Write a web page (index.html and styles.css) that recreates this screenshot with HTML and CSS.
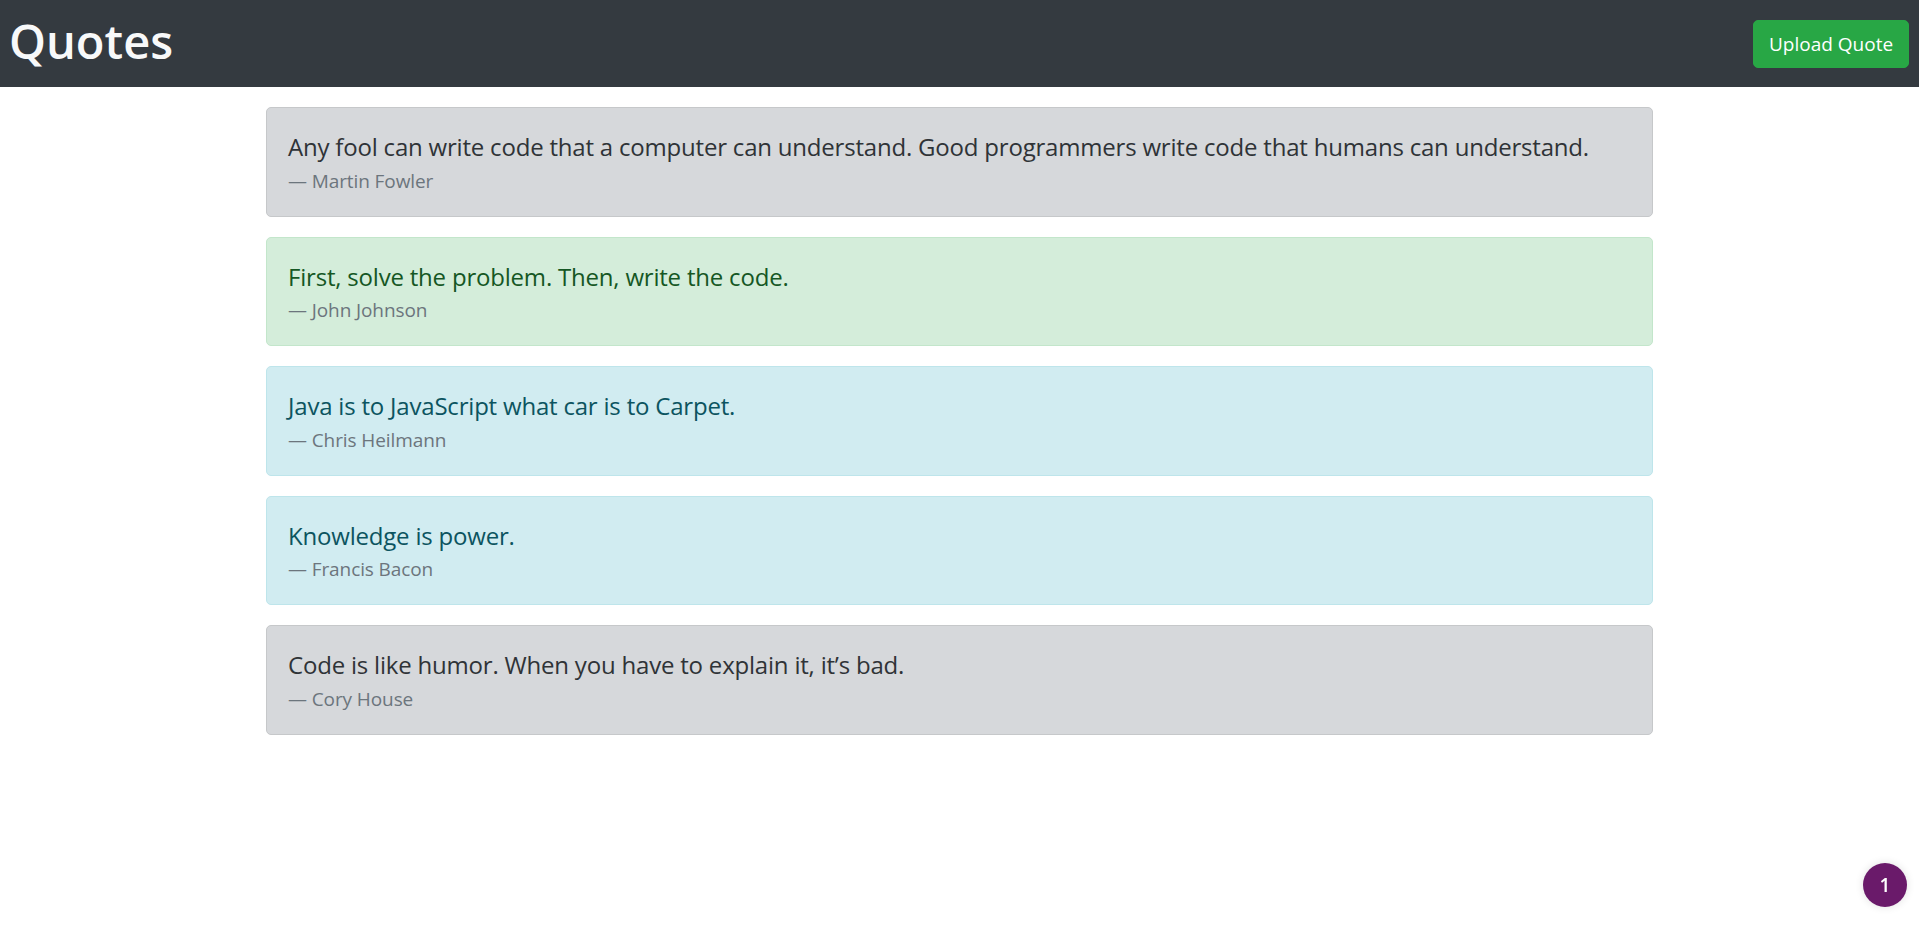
FILE: index.html
```html
<!DOCTYPE html>
<html lang="en">
<head>
<meta charset="utf-8">
<title>Quotes</title>
<link rel="stylesheet" href="styles.css">
</head>
<body>
<header class="navbar">
  <h1 class="brand">Quotes</h1>
  <button class="btn-upload" type="button">Upload Quote</button>
</header>
<main class="quotes">
  <div class="alert alert-secondary">
    <blockquote class="quote">
      <p class="quote-text">Any fool can write code that a computer can understand. Good programmers write code that humans can understand.</p>
      <footer class="quote-author">Martin Fowler</footer>
    </blockquote>
  </div>
  <div class="alert alert-success">
    <blockquote class="quote">
      <p class="quote-text">First, solve the problem. Then, write the code.</p>
      <footer class="quote-author">John Johnson</footer>
    </blockquote>
  </div>
  <div class="alert alert-info">
    <blockquote class="quote">
      <p class="quote-text">Java is to JavaScript what car is to Carpet.</p>
      <footer class="quote-author">Chris Heilmann</footer>
    </blockquote>
  </div>
  <div class="alert alert-info">
    <blockquote class="quote">
      <p class="quote-text">Knowledge is power.</p>
      <footer class="quote-author">Francis Bacon</footer>
    </blockquote>
  </div>
  <div class="alert alert-secondary">
    <blockquote class="quote">
      <p class="quote-text">Code is like humor. When you have to explain it, it’s bad.</p>
      <footer class="quote-author">Cory House</footer>
    </blockquote>
  </div>
</main>
<div class="count-badge">1</div>
</body>
</html>
```
FILE: styles.css
```css
* { box-sizing: border-box; }
html, body { margin: 0; padding: 0; }
body {
  font-family: "Open Sans", "Noto Sans", "Liberation Sans", sans-serif;
  background: #fff;
  color: #212529;
  min-height: 946px;
}
.navbar {
  height: 87px;
  background: #343a40;
  display: flex;
  align-items: center;
  justify-content: space-between;
  padding: 0 10px 0 9px;
}
.brand {
  margin: 0 0 6px;
  color: #f8f9fa;
  font-size: 47px;
  font-weight: 600;
  line-height: 54px;
  letter-spacing: 0;
}
.btn-upload {
  font-family: inherit;
  font-size: 19px;
  line-height: 30px;
  color: #fff;
  background: #28a745;
  border: 1px solid #28a745;
  border-radius: 5px;
  padding: 8px 15px;
  height: 48px;
  width: 156px;
  white-space: nowrap;
  cursor: pointer;
}
.quotes {
  width: 1387px;
  margin: 20px auto 0;
  display: flex;
  flex-direction: column;
  gap: 20px;
}
.alert {
  border: 1px solid transparent;
  border-radius: 5px;
  padding: 20px 21px;
}
.alert-secondary { background: #d6d8db; border-color: #c6c8ca; color: #2f3337; }
.alert-success { background: #d4edda; border-color: #c3e6cb; color: #155724; }
.alert-info { background: #d1ecf1; border-color: #bee5eb; color: #0c5460; }
.quote { margin: 0; }
.quote-text {
  margin: 0;
  font-size: 24px;
  line-height: 37.5px;
  letter-spacing: -0.2px;
}
.quote-author {
  font-size: 19px;
  line-height: 30px;
  color: #6c757d;
  letter-spacing: -0.1px;
}
.quote-author::before { content: "\2014\00A0"; }
.count-badge {
  position: fixed;
  right: 12px;
  bottom: 39px;
  width: 44px;
  height: 44px;
  border-radius: 50%;
  background: #6a1a6a;
  color: #fff;
  font-size: 19px;
  font-weight: 600;
  display: flex;
  align-items: center;
  justify-content: center;
  box-shadow: 0 0 8px rgba(0,0,0,0.12);
}
```
